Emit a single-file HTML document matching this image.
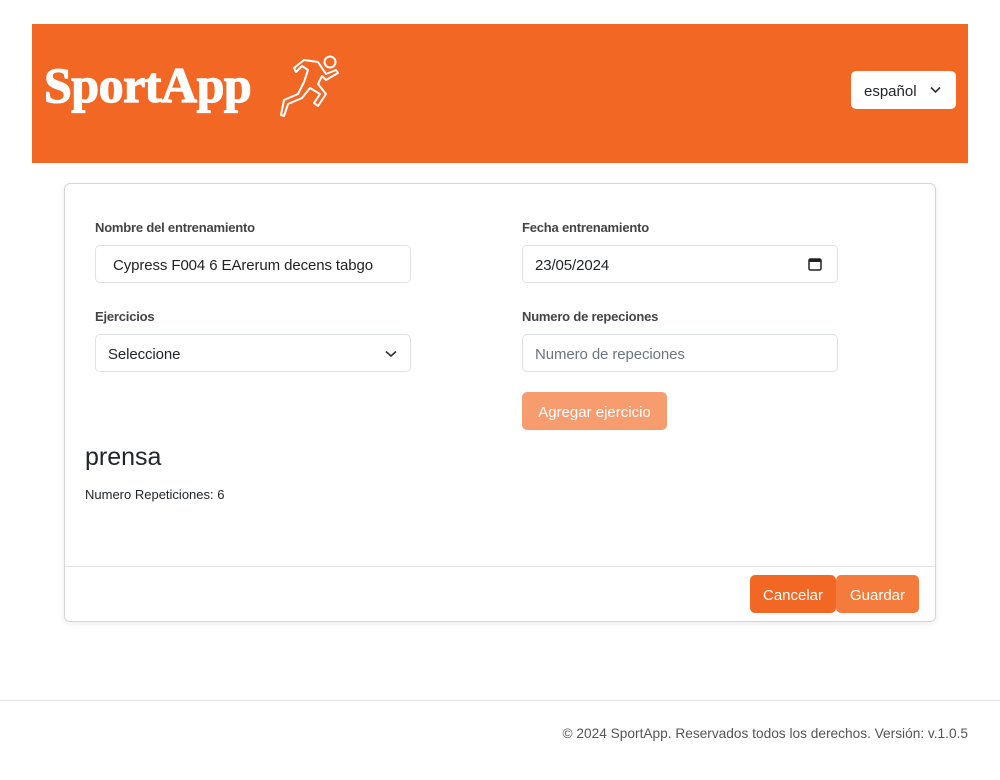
<!DOCTYPE html>
<html><head><meta charset="utf-8"><style>
*{box-sizing:border-box}
body{margin:0;width:1000px;height:780px;background:#fff;font-family:"Liberation Sans",sans-serif;color:#212529;position:relative}
.hdr{position:absolute;left:32px;top:24px;width:936px;height:139px;background:#f36724}
.logo{position:absolute;left:12px;top:31px;font-family:"Liberation Serif",serif;font-weight:bold;font-size:50px;color:#fff;letter-spacing:-0.5px;line-height:60px;-webkit-text-stroke:1.2px #fff}
.lang{position:absolute;left:819px;top:47px;width:105px;height:38px;background:#fff;border-radius:5px;font-size:15px;padding:12px 0 0 13px}
.card{position:absolute;left:64px;top:183px;width:872px;height:439px;border:1px solid #d6d6d6;border-radius:6px;box-shadow:0 2px 6px rgba(0,0,0,.08)}
.lbl{position:absolute;font-size:13px;font-weight:bold;color:#444;letter-spacing:-.2px}
.inp{position:absolute;width:316px;height:38px;border:1px solid #dee2e6;border-radius:5px;font-size:15px;padding:11px 12px 0;letter-spacing:-.1px}
.btn{position:absolute;color:#fff;border-radius:5px;font-size:15px;text-align:center;line-height:41px}
.foot{position:absolute;left:0;top:700px;width:1000px;border-top:1px solid #e5e5e5}
</style></head><body>
<div class="hdr">
<div class="logo">SportApp</div>
<svg style="position:absolute;left:246px;top:30px" width="64" height="64" viewBox="0 0 64 64" fill="none" stroke="#fff" stroke-width="2" stroke-linejoin="round"><circle cx="52" cy="8" r="5.5"/><path d="M16 14 L26 6 L40 8 L48 20 L58 16 L60 19 L48 26 L44 22 L40 30 L48 40 L40 52 L36 49 L42 40 L32 34 L24 44 L10 50 L6 62 L3 61 L6 46 L20 40 L26 28 L30 16 L24 12 L18 18 Z"/></svg>
<div class="lang">español<svg style="position:absolute;left:79px;top:15px" width="11" height="8" viewBox="0 0 11 8" fill="none" stroke="#333" stroke-width="1.6"><path d="M1 1.5 L5.5 6 L10 1.5"/></svg></div>
</div>
<div class="card">
<div class="lbl" style="left:30px;top:36px">Nombre del entrenamiento</div>
<div class="inp" style="left:30px;top:61px;padding-left:17px;color:#222">Cypress F004 6 EArerum decens tabgo</div>
<div class="lbl" style="left:30px;top:125px">Ejercicios</div>
<div class="inp" style="left:30px;top:150px">Seleccione<svg style="position:absolute;left:289px;top:15px" width="12" height="8" viewBox="0 0 12 8" fill="none" stroke="#333" stroke-width="1.6"><path d="M1 1.5 L6 6 L11 1.5"/></svg></div>
<div class="lbl" style="left:457px;top:36px">Fecha entrenamiento</div>
<div class="inp" style="left:457px;top:61px">23/05/2024<svg style="position:absolute;left:285px;top:11px" width="14" height="14" viewBox="0 0 14 14"><rect x="1" y="2" width="12" height="11" rx="1.5" fill="none" stroke="#222" stroke-width="1.5"/><rect x="1" y="2" width="12" height="3" fill="#222"/></svg></div>
<div class="lbl" style="left:457px;top:125px">Numero de repeciones</div>
<div class="inp" style="left:457px;top:150px;color:#6c757d">Numero de repeciones</div>
<div class="btn" style="left:457px;top:208px;width:145px;height:38px;background:#f79c6f">Agregar ejercicio</div>
<div style="position:absolute;left:20px;top:259px;font-size:25px">prensa</div>
<div style="position:absolute;left:20px;top:303px;font-size:13px">Numero Repeticiones: 6</div>
<div style="position:absolute;left:0;top:382px;width:870px;border-top:1px solid #e5e5e5"></div>
<div class="btn" style="left:685px;top:391px;width:86px;height:38px;background:#f36724">Cancelar</div>
<div class="btn" style="left:771px;top:391px;width:83px;height:38px;background:#f47b3c">Guardar</div>
</div>
<div class="foot"></div>
<div style="position:absolute;right:32px;top:726px;font-size:13.7px;color:#555">© 2024 SportApp. Reservados todos los derechos. Versión: v.1.0.5</div>
</body></html>
